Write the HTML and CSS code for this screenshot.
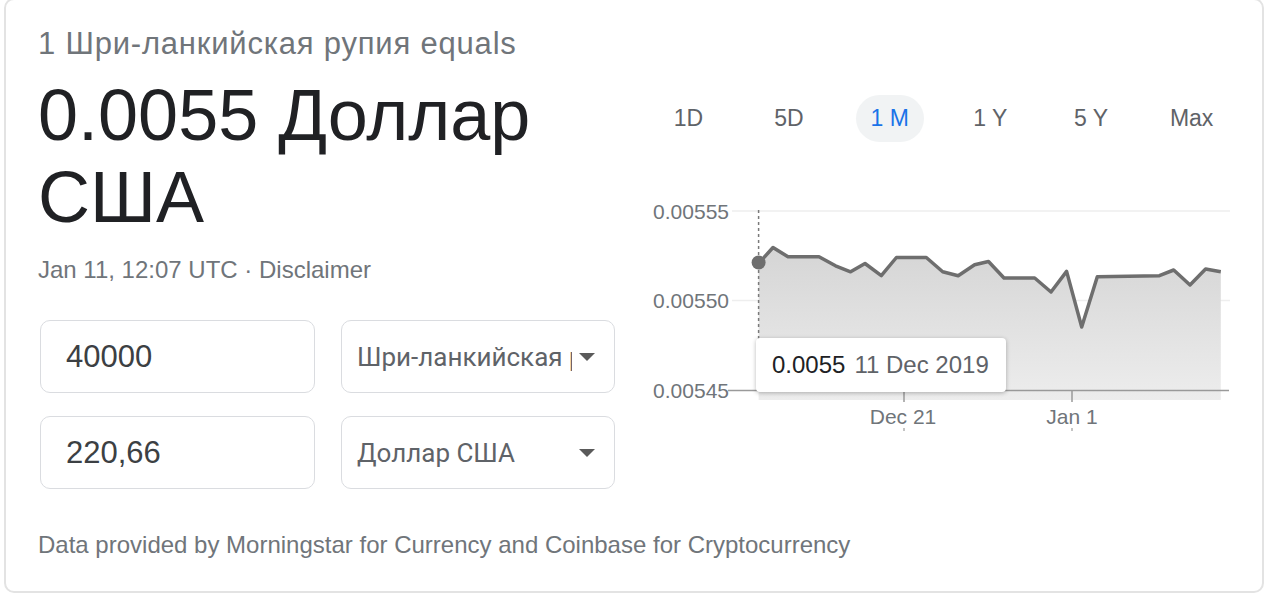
FILE: index.html
```html
<!DOCTYPE html>
<html lang="ru">
<head>
<meta charset="utf-8">
<title>Currency converter</title>
<link rel="stylesheet" href="styles.css">
</head>
<body>
<div class="card">
  <div class="main">
    <div class="left">
      <div class="subtitle">1 Шри-ланкийская рупия equals</div>
      <div class="value">0.0055 Доллар США</div>
      <div class="meta">Jan 11, 12:07 UTC · <span class="link">Disclaimer</span></div>
      <div class="converter">
        <div class="field"><span class="num">40000</span></div>
        <div class="field select"><span class="sel-text">Шри-ланкийская рупия</span><span class="arrow"></span></div>
        <div class="field"><span class="num">220,66</span></div>
        <div class="field select"><span class="sel-text">Доллар США</span><span class="arrow"></span></div>
      </div>
    </div>
    <div class="right">
      <div class="tabs">
        <span class="tab">1D</span>
        <span class="tab">5D</span>
        <span class="tab active">1 M</span>
        <span class="tab">1 Y</span>
        <span class="tab">5 Y</span>
        <span class="tab">Max</span>
      </div>
      <div class="chart">
        <svg class="plot" width="604" height="250" viewBox="638 190 604 250" xmlns="http://www.w3.org/2000/svg">
          <defs>
            <linearGradient id="fillGrad" x1="0" y1="0" x2="0" y2="1">
              <stop offset="0" stop-color="#d5d5d5"/>
              <stop offset="1" stop-color="#ededed"/>
            </linearGradient>
          </defs>
          <line x1="732" y1="211" x2="1230" y2="211" stroke="#eeeeee" stroke-width="1.5"/>
          <line x1="732" y1="300.5" x2="1230" y2="300.5" stroke="#eeeeee" stroke-width="1.5"/>
          <polygon fill="url(#fillGrad)" points="758.6,263.5 773,247.5 788,256.8 819,256.8 835.5,265.8 850.6,271.8 865,263.5 881.3,275.7 896.4,257.5 926.3,257.5 942.7,271.8 958.2,275.7 974.6,264.8 988.5,261.5 1004,278 1034.7,278 1051,292 1066.6,271.4 1081.7,327 1097.3,276.7 1159.4,275.7 1173.7,270 1190,285 1205.6,269 1220.8,271.8 1220.8,400 758.6,400"/>
          <line x1="728" y1="390.5" x2="1229" y2="390.5" stroke="#9a9a9a" stroke-width="1.5"/>
          <line x1="904" y1="390" x2="904" y2="402" stroke="#9a9a9a" stroke-width="1.5"/>
          <line x1="1072" y1="390" x2="1072" y2="402" stroke="#9a9a9a" stroke-width="1.5"/>
          <line x1="904" y1="428" x2="904" y2="431" stroke="#b0b0b0" stroke-width="1.5"/>
          <line x1="1072" y1="428" x2="1072" y2="431" stroke="#b0b0b0" stroke-width="1.5"/>
          <line x1="758.6" y1="210" x2="758.6" y2="390" stroke="#7a7a7a" stroke-width="1.5" stroke-dasharray="3 3"/>
          <polyline fill="none" stroke="#6e6e6e" stroke-width="3.5" stroke-linejoin="round" points="758.6,263.5 773,247.5 788,256.8 819,256.8 835.5,265.8 850.6,271.8 865,263.5 881.3,275.7 896.4,257.5 926.3,257.5 942.7,271.8 958.2,275.7 974.6,264.8 988.5,261.5 1004,278 1034.7,278 1051,292 1066.6,271.4 1081.7,327 1097.3,276.7 1159.4,275.7 1173.7,270 1190,285 1205.6,269 1220.8,271.8"/>
          <circle cx="758.6" cy="262.5" r="7" fill="#6e6e6e"/>
          <g class="axis-text">
            <text x="729" y="218.5" text-anchor="end">0.00555</text>
            <text x="729" y="308" text-anchor="end">0.00550</text>
            <text x="729" y="397.5" text-anchor="end">0.00545</text>
            <text x="903" y="423.5" text-anchor="middle">Dec 21</text>
            <text x="1072" y="423.5" text-anchor="middle">Jan 1</text>
          </g>
        </svg>
        <div class="tooltip"><span class="tt-val">0.0055</span><span class="tt-date">11 Dec 2019</span></div>
      </div>
    </div>
  </div>
  <div class="footer">Data provided by Morningstar for Currency and Coinbase for Cryptocurrency</div>
</div>
</body>
</html>
```
FILE: styles.css
```css
html, body {
  margin: 0;
  padding: 0;
  background: #ffffff;
}

body {
  font-family: "Liberation Sans", Arial, Helvetica, sans-serif;
  color: #202124;
}

.card {
  box-sizing: border-box;
  margin: -2px 0 0 4px;
  width: 1260px;
  border: 2px solid #e3e3e3;
  border-radius: 10px;
  padding: 30px 0 34px 32px;
}

.main {
  display: flex;
  gap: 22px;
}

.left {
  width: 578px;
  flex: none;
}

.subtitle {
  font-size: 31px;
  line-height: 28px;
  letter-spacing: 0.8px;
  color: #70757a;
  white-space: nowrap;
}

.value {
  margin-top: 16px;
  font-size: 72px;
  line-height: 82px;
  color: #202124;
}

.meta {
  margin-top: 20px;
  font-size: 24px;
  line-height: 24px;
  color: #70757a;
}

.converter {
  margin: 38px 0 0 2px;
  display: grid;
  grid-template-columns: 275px 274px;
  grid-template-rows: 73px 73px;
  column-gap: 26px;
  row-gap: 23px;
}

.field {
  box-sizing: border-box;
  border: 1px solid #dadce0;
  border-radius: 10px;
  display: flex;
  align-items: center;
  padding-left: 25px;
}

.num {
  font-size: 31px;
  color: #3c4043;
}

.field.select {
  padding-left: 15px;
}

.sel-text {
  font-family: Roboto, "Liberation Sans", sans-serif;
  font-size: 26px;
  color: #5f6368;
  width: 215px;
  overflow: hidden;
  white-space: nowrap;
  flex: none;
}

.arrow {
  margin-left: 7px;
  width: 0;
  height: 0;
  border-left: 8px solid transparent;
  border-right: 8px solid transparent;
  border-top: 8px solid #5a5a5a;
}

.right {
  width: 604px;
  flex: none;
}

.tabs {
  margin-top: 65px;
  display: grid;
  grid-template-columns: repeat(6, 1fr);
  height: 47px;
}

.tab {
  justify-self: center;
  width: 68px;
  height: 47px;
  border-radius: 24px;
  display: flex;
  align-items: center;
  justify-content: center;
  font-size: 23px;
  color: #5f6368;
}

.tab.active {
  background: #f1f3f4;
  color: #1a73e8;
}

.chart {
  position: relative;
  margin-top: 48px;
  height: 250px;
}

.plot {
  display: block;
}

.axis-text text {
  font-family: "Liberation Sans", Arial, sans-serif;
  font-size: 21px;
  fill: #70757a;
}

.tooltip {
  position: absolute;
  left: 118px;
  top: 148px;
  box-sizing: border-box;
  width: 250px;
  height: 54px;
  background: #ffffff;
  border-radius: 4px;
  box-shadow: 0 1px 4px rgba(0, 0, 0, 0.28);
  display: flex;
  align-items: center;
  padding-left: 16px;
  font-size: 24px;
}

.tt-val {
  color: #202124;
}

.tt-date {
  margin-left: 9px;
  color: #5f6368;
}

.footer {
  margin-top: 44px;
  font-size: 24px;
  line-height: 24px;
  color: #70757a;
}
```
